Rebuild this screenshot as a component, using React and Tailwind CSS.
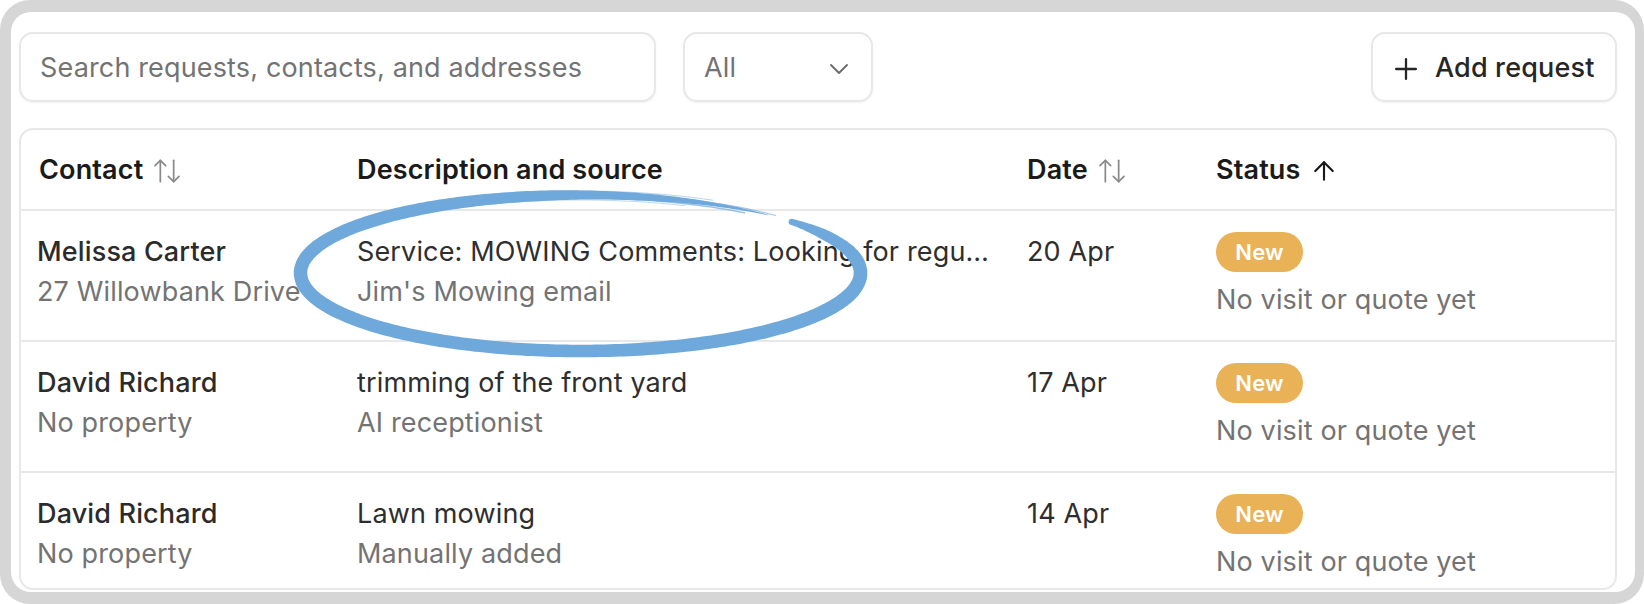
import { ArrowUp, ArrowUpDown, ChevronDown, Plus } from "lucide-react";

const requests = [
  {
    id: 1,
    name: "Melissa Carter",
    address: "27 Willowbank Drive",
    description:
      "Service: MOWING Comments: Looking for regular mowing every fortnight",
    source: "Jim's Mowing email",
    date: "20 Apr",
  },
  {
    id: 2,
    name: "David Richard",
    address: "No property",
    description: "trimming of the front yard",
    source: "AI receptionist",
    date: "17 Apr",
  },
  {
    id: 3,
    name: "David Richard",
    address: "No property",
    description: "Lawn mowing",
    source: "Manually added",
    date: "14 Apr",
  },
];

// hand drawn marker ring around the first description
const cx = 580.5;
const cy = 273;
const rx = 280;
const ry = 78;

const widths = [
  [-41, 6],
  [-30, 10.5],
  [-10, 13.5],
  [20, 14],
  [90, 12.5],
  [180, 13.5],
  [230, 12.5],
  [262, 10.5],
  [285, 7],
  [300, 3.5],
  [312, 0.6],
];

const widthAt = (deg) => {
  for (let i = 0; i < widths.length - 1; i++) {
    const [a, wa] = widths[i];
    const [b, wb] = widths[i + 1];
    if (deg >= a && deg <= b) return wa + ((deg - a) / (b - a)) * (wb - wa);
  }
  return 0;
};

const pointAt = (deg, offset) => {
  const t = (deg * Math.PI) / 180;
  const x = cx + rx * Math.cos(t);
  const y = cy + ry * Math.sin(t);
  let nx = ry * Math.cos(t);
  let ny = rx * Math.sin(t);
  const len = Math.hypot(nx, ny);
  nx /= len;
  ny /= len;
  return [x + nx * offset, y + ny * offset];
};

const buildStroke = () => {
  const outer = [];
  const inner = [];
  for (let d = -41; d <= 312; d += 1) {
    const w = widthAt(d) / 2;
    outer.push(pointAt(d, w));
    inner.push(pointAt(d, -w));
  }
  const pts = [...outer, ...inner.reverse()];
  return (
    "M" + pts.map(([x, y]) => `${x.toFixed(1)} ${y.toFixed(1)}`).join("L") + "Z"
  );
};

const buildLine = (offset, from, to) => {
  const pts = [];
  for (let d = from; d <= to; d += 1) pts.push(pointAt(d, offset));
  return "M" + pts.map(([x, y]) => `${x.toFixed(1)} ${y.toFixed(1)}`).join("L");
};

const streaks = [
  { o: -3, a: 250, b: 306, w: 1.5, op: 0.7 },
  { o: 1.5, a: 255, b: 314, w: 1.2, op: 0.6 },
  { o: 4, a: 240, b: 298, w: 1, op: 0.5 },
  { o: -5, a: 245, b: 292, w: 1, op: 0.45 },
];

function MarkerRing() {
  const start = pointAt(-41, 0);
  return (
    <svg
      className="absolute left-0 top-0 pointer-events-none"
      width="1644"
      height="604"
      viewBox="0 0 1644 604"
    >
      <path d={buildStroke()} fill="#6fa9dc" />
      <circle cx={start[0]} cy={start[1]} r="3.2" fill="#6fa9dc" />
      {streaks.map((s, i) => (
        <path
          key={i}
          d={buildLine(s.o, s.a, s.b)}
          fill="none"
          stroke="#6fa9dc"
          strokeWidth={s.w}
          strokeOpacity={s.op}
          strokeLinecap="round"
        />
      ))}
    </svg>
  );
}

function RequestRow({ request }) {
  return (
    <div className="grid grid-cols-[318px_670px_190px_1fr] border-t-2 border-[#e8e8e8] pt-[21px] pb-[20px] leading-[40px] text-[27px] tracking-[0.15px]">
      <div className="pl-[16px] pr-[12px] min-w-0">
        <div className="font-medium text-[#2b2b2b] truncate">{request.name}</div>
        <div className="text-[#737373] whitespace-nowrap">{request.address}</div>
      </div>
      <div className="px-[18px] min-w-0">
        <div className="text-[#2e2e2e] truncate">{request.description}</div>
        <div className="text-[#737373] truncate">{request.source}</div>
      </div>
      <div className="px-[18px] text-[#2e2e2e]">{request.date}</div>
      <div className="px-[17px]">
        <div className="w-[87px] h-[40px] rounded-full bg-[#e9b257] text-white font-semibold text-[22px] leading-none flex items-center justify-center">
          New
        </div>
        <div className="mt-[8px] text-[#737373]">No visit or quote yet</div>
      </div>
    </div>
  );
}

function App() {
  return (
    <div className="relative w-[1644px] h-[604px] bg-white font-['Inter',sans-serif]">
      <div className="h-full bg-[#d6d6d6] rounded-[30px] pt-[12px] pb-[12px] pl-[11px] pr-[9px]">
        <div className="h-full bg-white rounded-[20px] overflow-hidden pt-[20px] pl-[8px] pr-[18px]">
          <div className="flex items-center h-[70px] text-[27px] tracking-[0.15px]">
            <div className="w-[637px] h-full rounded-[14px] border-2 border-[#e8e8e8] shadow-[0_1px_2px_rgba(0,0,0,0.06)] flex items-center px-[19px] pt-[3px] text-[#737373]">
              Search requests, contacts, and addresses
            </div>
            <div className="ml-[27px] w-[190px] h-full rounded-[14px] border-2 border-[#e8e8e8] shadow-[0_1px_2px_rgba(0,0,0,0.06)] flex items-center justify-between pl-[19px] pr-[16px] pt-[3px] text-[#737373]">
              <span>All</span>
              <ChevronDown size={32} strokeWidth={1.4} className="text-[#6b6b6b]" />
            </div>
            <div className="ml-auto w-[246px] h-full rounded-[14px] border-2 border-[#e8e8e8] shadow-[0_1px_2px_rgba(0,0,0,0.06)] flex items-center pl-[16px] pt-[3px] font-medium text-[#262626]">
              <Plus size={34} strokeWidth={1.6} />
              <span className="ml-[12px]">Add request</span>
            </div>
          </div>

          <div className="mt-[26px] h-[462px] overflow-hidden rounded-[14px] border-2 border-[#e8e8e8]">
            <div className="grid grid-cols-[318px_670px_190px_1fr] h-[79px] items-center pt-[2px] text-[27px] tracking-[0.15px] font-semibold text-[#1a1a1a]">
              <div className="px-[18px] flex items-center gap-[8px]">
                Contact
                <ArrowUpDown size={32} strokeWidth={1.3} className="text-[#8a8a8a]" />
              </div>
              <div className="px-[18px]">Description and source</div>
              <div className="px-[18px] flex items-center gap-[8px]">
                Date
                <ArrowUpDown size={32} strokeWidth={1.3} className="text-[#8a8a8a]" />
              </div>
              <div className="px-[17px] flex items-center gap-[8px]">
                Status
                <ArrowUp size={30} strokeWidth={1.7} className="text-[#1a1a1a]" />
              </div>
            </div>
            {requests.map((request) => (
              <RequestRow key={request.id} request={request} />
            ))}
          </div>
        </div>
      </div>
      <MarkerRing />
    </div>
  );
}

export default App;
